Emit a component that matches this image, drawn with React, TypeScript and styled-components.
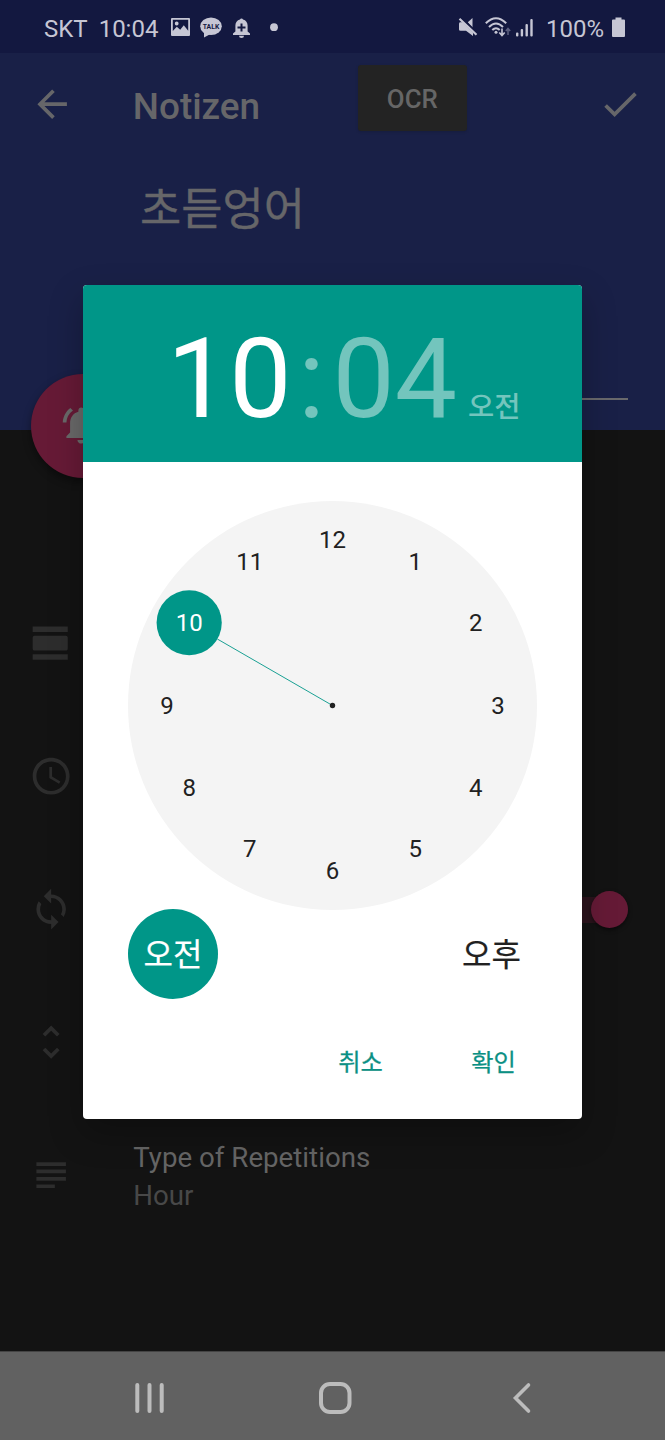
import React from "react";
import styled, { createGlobalStyle } from "styled-components";
import {
  MdAccessTime,
  MdArrowBack,
  MdCheck,
  MdLoop,
  MdNotificationsActive,
  MdSubject,
  MdUnfoldMore,
  MdViewDay,
} from "react-icons/md";

const TEAL = "#009688";

const GlobalStyle = createGlobalStyle`
  * { box-sizing: border-box; }
  body {
    margin: 0;
    background: #131313;
    font-family: Roboto, "Noto Sans CJK KR", sans-serif;
  }
`;

const Screen = styled.div`
  position: relative;
  width: 665px;
  height: 1440px;
  display: flex;
  flex-direction: column;
  overflow: hidden;
  background: #131313;
`;

const StatusBar = styled.div`
  height: 53px;
  flex: none;
  display: flex;
  justify-content: space-between;
  padding: 0 40px 0 44px;
  background: #131840;
  color: #c6c6d4;
  font-size: 24px;
  line-height: 58px;
`;

const StatusGroup = styled.div`
  display: flex;
  align-items: flex-start;
`;

const StatusText = styled.span<{ $gap: number }>`
  margin-right: ${(p) => p.$gap}px;
  white-space: nowrap;
`;

const StatusIcon = styled.svg<{ $gap?: number }>`
  flex: none;
  display: block;
  margin: 16px ${(p) => p.$gap ?? 0}px 0 0;
`;

const Header = styled.header`
  height: 377px;
  flex: none;
  display: flex;
  flex-direction: column;
  background: #192047;
  color: #666669;
`;

const Toolbar = styled.div`
  display: flex;
  align-items: center;
  height: 103px;
  padding: 0 22px 0 29.5px;
  svg { display: block; }
`;

const ToolbarTitle = styled.h1`
  margin: 5px 0 0 59px;
  width: 225px;
  font-size: 36.9px;
  font-weight: 500;
  line-height: 44px;
`;

const OcrButton = styled.button`
  width: 109px;
  height: 66px;
  margin: 0 131px 14px 0;
  padding: 2px 0 0;
  border: 0;
  border-radius: 3px;
  background: #232323;
  color: #666;
  font: 500 25.8px Roboto, sans-serif;
  box-shadow: 0 1px 3px rgba(0, 0, 0, 0.15);
`;

const NoteTitle = styled.div`
  margin: 21.5px 0 0 140px;
  font-size: 44.8px;
  line-height: 64px;
  -webkit-text-stroke: 0.4px currentColor;
`;

const Underline = styled.div`
  margin: auto 37px 30px 134px;
  height: 2px;
  background: #69696c;
`;

const Fab = styled.div`
  position: absolute;
  left: 31px;
  top: 374px;
  width: 104px;
  height: 104px;
  border-radius: 50%;
  display: flex;
  align-items: center;
  justify-content: center;
  background: #661a36;
  color: #696969;
  box-shadow: 0 4px 8px rgba(0, 0, 0, 0.4);
  svg { margin: 0 3px 1px 0; flex: none; }
`;

const Settings = styled.main`
  flex: 1;
  display: flex;
  flex-direction: column;
  padding-top: 147px;
`;

const SettingRow = styled.div`
  height: 133px;
  flex: none;
  display: flex;
  align-items: center;
  padding: 0 37px 0 29px;
  color: #2d2d2d;
  svg { display: block; flex: none; }
`;

const RowText = styled.div`
  margin: 3px 0 0 60px;
  display: flex;
  flex-direction: column;
  font-size: 27.7px;
  line-height: 38px;
`;

const RowLabel = styled.span`
  color: #656565;
`;

const RowValue = styled.span`
  color: #484848;
`;

const Switch = styled.div`
  margin-left: auto;
  width: 64px;
  height: 26px;
  border-radius: 13px;
  display: flex;
  align-items: center;
  justify-content: flex-end;
  background: #2c141d;
`;

const Thumb = styled.span`
  flex: none;
  width: 37px;
  height: 37px;
  border-radius: 50%;
  background: #651a36;
  box-shadow: 0 2px 4px rgba(0, 0, 0, 0.5);
`;

const NavBar = styled.nav`
  height: 89px;
  flex: none;
  display: flex;
  align-items: center;
  justify-content: space-between;
  padding: 4px 133px 0 134px;
  background: #616161;
  border-top: 1px solid #444;
  svg { display: block; flex: none; }
`;

const HomeIcon = styled.svg`
  margin-right: 8px;
`;

const Dialog = styled.section`
  position: absolute;
  left: 83px;
  top: 285px;
  width: 498.5px;
  height: 834px;
  display: flex;
  flex-direction: column;
  overflow: hidden;
  border-radius: 4px;
  background: #fff;
`;

const DialogShadow = styled(Dialog)`
  background: none;
  box-shadow: 0 14px 34px rgba(0, 0, 0, 0.25);
`;

const TimeHeader = styled.div`
  height: 177px;
  flex: none;
  display: flex;
  align-items: baseline;
  padding-left: 84px;
  background: ${TEAL};
`;

const TimePart = styled.span<{ $active?: boolean; $gap?: number }>`
  margin-right: ${(p) => p.$gap ?? 0}px;
  color: ${(p) => (p.$active ? "#fff" : "#73c5bd")};
  font-size: 110.8px;
  line-height: 189px;
`;

const Period = styled.span`
  color: #73c5bd;
  font-size: 28.5px;
  font-weight: 500;
  line-height: 40px;
`;

const Dial = styled.svg`
  display: block;
  flex: none;
  margin: 39px 0 0 45px;
`;

const PeriodRow = styled.div`
  display: flex;
  justify-content: space-between;
  padding: 0 45px;
  margin-top: -1px;
`;

const PeriodButton = styled.button<{ $selected?: boolean }>`
  width: 90px;
  height: 90px;
  padding: 0 0 5px;
  border: 0;
  border-radius: 50%;
  background: ${(p) => (p.$selected ? TEAL : "transparent")};
  color: ${(p) => (p.$selected ? "#fff" : "#212121")};
  font: 400 32px Roboto, "Noto Sans CJK KR", sans-serif;
  -webkit-text-stroke: 0.2px currentColor;
`;

const Actions = styled.div`
  display: flex;
  justify-content: flex-end;
  padding: 28px 29px 0 0;
  gap: 15px;
`;

const ActionButton = styled.button`
  width: 118px;
  height: 66px;
  padding: 0;
  border: 0;
  background: transparent;
  color: #0b9084;
  font: 400 24.3px Roboto, "Noto Sans CJK KR", sans-serif;
  -webkit-text-stroke: 0.25px currentColor;
`;

const SELECTED_HOUR = 10;
const HOURS = [12, 1, 2, 3, 4, 5, 6, 7, 8, 9, 10, 11];
const C = 204.5;

function ClockDial() {
  const at = (h: number, r: number) => {
    const a = (h * Math.PI) / 6;
    return { x: C + r * Math.sin(a), y: C - r * Math.cos(a) };
  };
  const knob = at(SELECTED_HOUR, 165.5);
  const edge = at(SELECTED_HOUR, 133);
  return (
    <Dial width="409" height="409" viewBox="0 0 409 409">
      <circle cx={C} cy={C} r={C} fill="#f4f4f4" />
      <line x1={C} y1={C} x2={edge.x} y2={edge.y} stroke={TEAL} strokeWidth="0.9" />
      <circle cx={C} cy={C} r="2.7" fill="#212121" />
      <circle cx={knob.x} cy={knob.y} r="32.6" fill={TEAL} />
      {HOURS.map((h) => {
        const p = at(h, 165.5);
        return (
          <text
            key={h}
            x={p.x}
            y={p.y + 8}
            textAnchor="middle"
            fontSize="24"
            fill={h === SELECTED_HOUR ? "#fff" : "#212121"}
          >
            {h}
          </text>
        );
      })}
    </Dial>
  );
}

const ICON = 44.3;

export default function App() {
  return (
    <>
      <GlobalStyle />
      <Screen>
        <StatusBar>
          <StatusGroup>
            <StatusText $gap={11}>SKT</StatusText>
            <StatusText $gap={13}>10:04</StatusText>
            <StatusIcon $gap={10} width="19" height="22" viewBox="0 0 19 22" fill="currentColor">
              <path
                fillRule="evenodd"
                d="M1 2h17a1 1 0 0 1 1 1v16a1 1 0 0 1-1 1H1a1 1 0 0 1-1-1V3a1 1 0 0 1 1-1zM1.8 3.8V15l4-4.2 3.4 3 3.6-4.5 4.4 5.5V3.8zM3.8 7.5a1.9 1.9 0 1 0 3.8 0a1.9 1.9 0 1 0-3.8 0z"
              />
            </StatusIcon>
            <StatusIcon $gap={11} width="22" height="22" viewBox="0 0 22 22">
              <ellipse cx="11" cy="10.3" rx="10.8" ry="8.8" fill="currentColor" />
              <path d="M4 15v6.500l6.500-3.500z" fill="currentColor" />
              <text x="11" y="13" textAnchor="middle" fontSize="8" fontWeight="700" textLength="16.5" lengthAdjust="spacingAndGlyphs" fill="#131840">
                TALK
              </text>
            </StatusIcon>
            <StatusIcon $gap={20} width="17" height="22" viewBox="0 0 17 22" fill="currentColor">
              <path
                fillRule="evenodd"
                d="M7 3.5a1.6 1.6 0 0 1 3 0c3 .7 4.6 3 4.6 6v6L17 17.6V19H0v-1.4l2.400-2.100v-6c0-3 1.600-5.300 4.600-6zM7.500 7.500v3h-3v2h3v3h2v-3h3v-2h-3v-3z"
              />
              <path d="M6 19.8h5a2.5 2.200 0 0 1-5 0z" />
            </StatusIcon>
            <StatusIcon width="8" height="22" viewBox="0 0 8 22">
              <circle cx="4" cy="11.2" r="3.9" fill="currentColor" />
            </StatusIcon>
          </StatusGroup>
          <StatusGroup>
            <StatusIcon $gap={6.5} width="20" height="22" viewBox="0 0 20 22" fill="currentColor">
              <path d="M1.8 6.200L4.600 6.200 15 16.500V20L8 14.800H2.500Q1 14.800 1 13.500V8Q1 6.800 1.800 6.200z" />
              <path d="M14.500 2v10.200L9.800 6.300z" />
              <path d="M1.500 2.800L18.500 18.800" stroke="currentColor" strokeWidth="2.2" />
              <path d="M3.300 1.300L19.800 17" stroke="#131840" strokeWidth="1.2" />
            </StatusIcon>
            <StatusIcon $gap={5} width="26" height="22" viewBox="0 0 26 22" fill="none" stroke="currentColor" strokeWidth="2">
              <path d="M.8 7.300Q11 -2.800 21.200 7.300" />
              <path d="M4 11Q11 3.800 18 11" />
              <path d="M7.300 14Q11 10.300 14.700 14" />
              <circle cx="11" cy="16.200" r="1.500" fill="currentColor" stroke="none" />
              <path d="M17 12.500v7M14.300 16.500l2.700 3 2.700-3" strokeWidth="1.6" />
              <path d="M23 19v-6M20.800 15l2.200-2.500 2.200 2.500" stroke="#5d6080" strokeWidth="1.5" />
            </StatusIcon>
            <StatusIcon $gap={12} width="18" height="22" viewBox="0 0 18 22" fill="currentColor">
              <rect x="0" y="16.5" width="2.4" height="4" rx="1" />
              <rect x="4.7" y="13" width="2.4" height="7.5" rx="1" />
              <rect x="9.5" y="8" width="2.4" height="12.5" rx="1" />
              <rect x="14.3" y="3" width="2.4" height="17.5" rx="1" />
            </StatusIcon>
            <StatusText $gap={8}>100%</StatusText>
            <StatusIcon width="13" height="22" viewBox="0 0 13 22" fill="currentColor">
              <path d="M3.5 1.5h6v2H12a1 1 0 0 1 1 1V20a1 1 0 0 1-1 1H1a1 1 0 0 1-1-1V4.500a1 1 0 0 1 1-1h2.500z" />
            </StatusIcon>
          </StatusGroup>
        </StatusBar>

        <Header>
          <Toolbar>
            <MdArrowBack size={ICON} />
            <ToolbarTitle>Notizen</ToolbarTitle>
            <OcrButton>OCR</OcrButton>
            <MdCheck size={ICON} />
          </Toolbar>
          <NoteTitle>초듣엉어</NoteTitle>
          <Underline />
        </Header>

        <Settings>
          <SettingRow>
            <MdViewDay size={ICON} />
          </SettingRow>
          <SettingRow>
            <MdAccessTime size={ICON} />
          </SettingRow>
          <SettingRow>
            <MdLoop size={ICON} />
            <Switch>
              <Thumb />
            </Switch>
          </SettingRow>
          <SettingRow>
            <MdUnfoldMore size={ICON} />
          </SettingRow>
          <SettingRow>
            <MdSubject size={ICON} />
            <RowText>
              <RowLabel>Type of Repetitions</RowLabel>
              <RowValue>Hour</RowValue>
            </RowText>
          </SettingRow>
        </Settings>

        <NavBar>
          <svg width="31" height="34" viewBox="0 0 31 34" stroke="#bcbcbc" strokeWidth="4" strokeLinecap="round">
            <path d="M3.3 4v26M15.5 4v26M27.7 4v26" />
          </svg>
          <HomeIcon width="34" height="34" viewBox="0 0 34 34" fill="none" stroke="#bcbcbc" strokeWidth="4">
            <rect x="3" y="3" width="28.5" height="28" rx="9" />
          </HomeIcon>
          <svg width="20" height="34" viewBox="0 0 20 34" fill="none" stroke="#bcbcbc" strokeWidth="3.6" strokeLinecap="round">
            <path d="M16.5 4L3.5 17l13 13" />
          </svg>
        </NavBar>

        <Fab>
          <MdNotificationsActive size={ICON} />
        </Fab>

        <DialogShadow as="div" />
        <Dialog>
          <TimeHeader>
            <TimePart $active $gap={6.5}>10</TimePart>
            <TimePart $gap={7.5}>:</TimePart>
            <TimePart $gap={11}>04</TimePart>
            <Period>오전</Period>
          </TimeHeader>
          <ClockDial />
          <PeriodRow>
            <PeriodButton $selected>오전</PeriodButton>
            <PeriodButton>오후</PeriodButton>
          </PeriodRow>
          <Actions>
            <ActionButton>취소</ActionButton>
            <ActionButton>확인</ActionButton>
          </Actions>
        </Dialog>
      </Screen>
    </>
  );
}
